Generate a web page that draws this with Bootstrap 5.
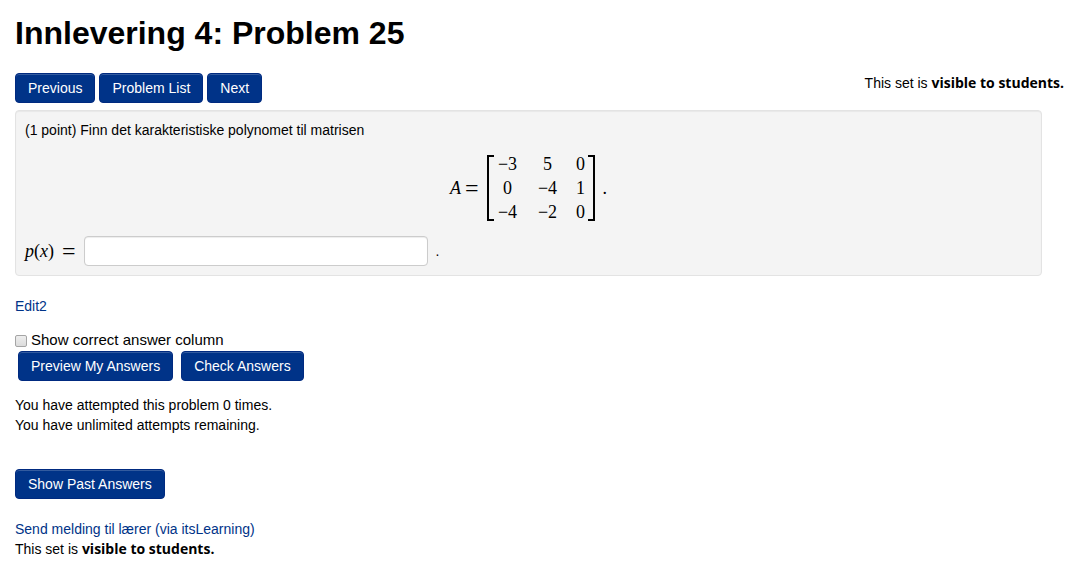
<!DOCTYPE html>
<html lang="no">
<head>
<meta charset="utf-8">
<meta name="viewport" content="width=device-width, initial-scale=1">
<title>Innlevering 4: Problem 25</title>
<link href="https://cdn.jsdelivr.net/npm/bootstrap@5.3.0/dist/css/bootstrap.min.css" rel="stylesheet">
<style>
  body { font: 14px/20px "Liberation Sans", Arial, sans-serif; color: #000; background: #fff; }
  .page { padding: 13px 15px 16px; }
  h1 { font-size: 32px; line-height: 40px; font-weight: 700; margin: 0 0 20px; }
  a { color: #038; text-decoration: none; }
  strong { font: 700 14px/20px "Open Sans", sans-serif; }
  .btn-main {
    --bs-btn-color: #fff; --bs-btn-bg: #038; --bs-btn-border-color: #002a80;
    --bs-btn-hover-color: #fff; --bs-btn-hover-bg: #002a70; --bs-btn-hover-border-color: #002a70;
    --bs-btn-padding-x: 12px; --bs-btn-padding-y: 4px;
    --bs-btn-font-size: 14px; --bs-btn-line-height: 20px; --bs-btn-border-radius: 4px;
    box-shadow: inset 0 1px 0 rgba(255,255,255,.2);
  }
  .set-note { margin-right: 6px; }
  .problem {
    background: #f4f4f4; border: 1px solid #e3e3e3; border-radius: 4px;
    box-shadow: inset 0 1px 1px rgba(0,0,0,.05); padding: 9px; margin: 7px 28px 20px 0;
  }
  .math { font: 18px/24px "Liberation Serif", serif; }
  .equals { font-size: 24px; line-height: 24px; }
  .matrix {
    display: grid; grid-template-columns: 24px 24px 10px; column-gap: 16px;
    text-align: center; position: relative; padding: 0 9px; white-space: nowrap;
    margin: 12px 0;
  }
  .matrix::before, .matrix::after {
    content: ""; position: absolute; top: 3px; bottom: 3px; width: 7px; border: 2px solid #000;
  }
  .matrix::before { left: 0; border-right: 0; }
  .matrix::after { right: 0; border-left: 0; }
  .answer { width: 344px; height: 30px; padding: 4px 6px; border-color: #ccc; border-radius: 4px; font-size: 14px; box-shadow: inset 0 1px 1px rgba(0,0,0,.075); }
  .options { margin-top: 13px; }
  .tick {
    appearance: none; width: 12px; height: 12px; margin: 6px 0 0; border: 1px solid #a5a5a5; border-radius: 2px;
    background: linear-gradient(#eee, #dcdcdc);
  }
  .tick:checked { background: #038; }
  .tick-label { font-size: 15px; line-height: 22px; }
  .actions { padding-left: 3px; }
  .attempts { margin: 14px 0 34px; }
  .footer-notes { margin-top: 20px; }
</style>
</head>
<body>
<main class="page">
  <h1>Innlevering 4: Problem 25</h1>
  <div class="d-flex justify-content-between">
    <nav class="d-flex gap-1" aria-label="Problems">
      <button type="button" class="btn btn-main">Previous</button>
      <button type="button" class="btn btn-main">Problem List</button>
      <button type="button" class="btn btn-main">Next</button>
    </nav>
    <div class="set-note">This set is <strong>visible to students.</strong></div>
  </div>

  <form>
    <section class="problem">
      <div>(1 point) Finn det karakteristiske polynomet til matrisen</div>
      <div class="math d-flex justify-content-center align-items-center">
        <i>A</i><span class="equals ms-1 me-2">=</span>
        <div class="matrix">
          <span>−3</span><span>5</span><span>0</span>
          <span>0</span><span>−4</span><span>1</span>
          <span>−4</span><span>−2</span><span>0</span>
        </div>
        <span class="ms-2">.</span>
      </div>
      <div class="d-flex align-items-center">
        <label class="math d-flex align-items-center me-2" for="px"><span><i>p</i>(<i>x</i>)</span><span class="equals ms-1 ps-1">=</span></label>
        <input id="px" type="text" class="form-control answer">
        <span class="ms-2">.</span>
      </div>
    </section>

    <a href="#edit">Edit2</a>

    <div class="options d-flex gap-1">
      <input type="checkbox" class="tick" id="show"><label class="tick-label" for="show">Show correct answer column</label>
    </div>
    <div class="actions d-flex gap-2">
      <button type="button" class="btn btn-main">Preview My Answers</button>
      <button type="button" class="btn btn-main">Check Answers</button>
    </div>
  </form>

  <p class="attempts">You have attempted this problem 0 times.<br>You have unlimited attempts remaining.</p>
  <button type="button" class="btn btn-main">Show Past Answers</button>
  <div class="footer-notes">
    <a href="#mail">Send melding til lærer (via itsLearning)</a>
    <div>This set is <strong>visible to students.</strong></div>
  </div>
</main>
<script src="https://cdn.jsdelivr.net/npm/bootstrap@5.3.0/dist/js/bootstrap.bundle.min.js"></script>
</body>
</html>
